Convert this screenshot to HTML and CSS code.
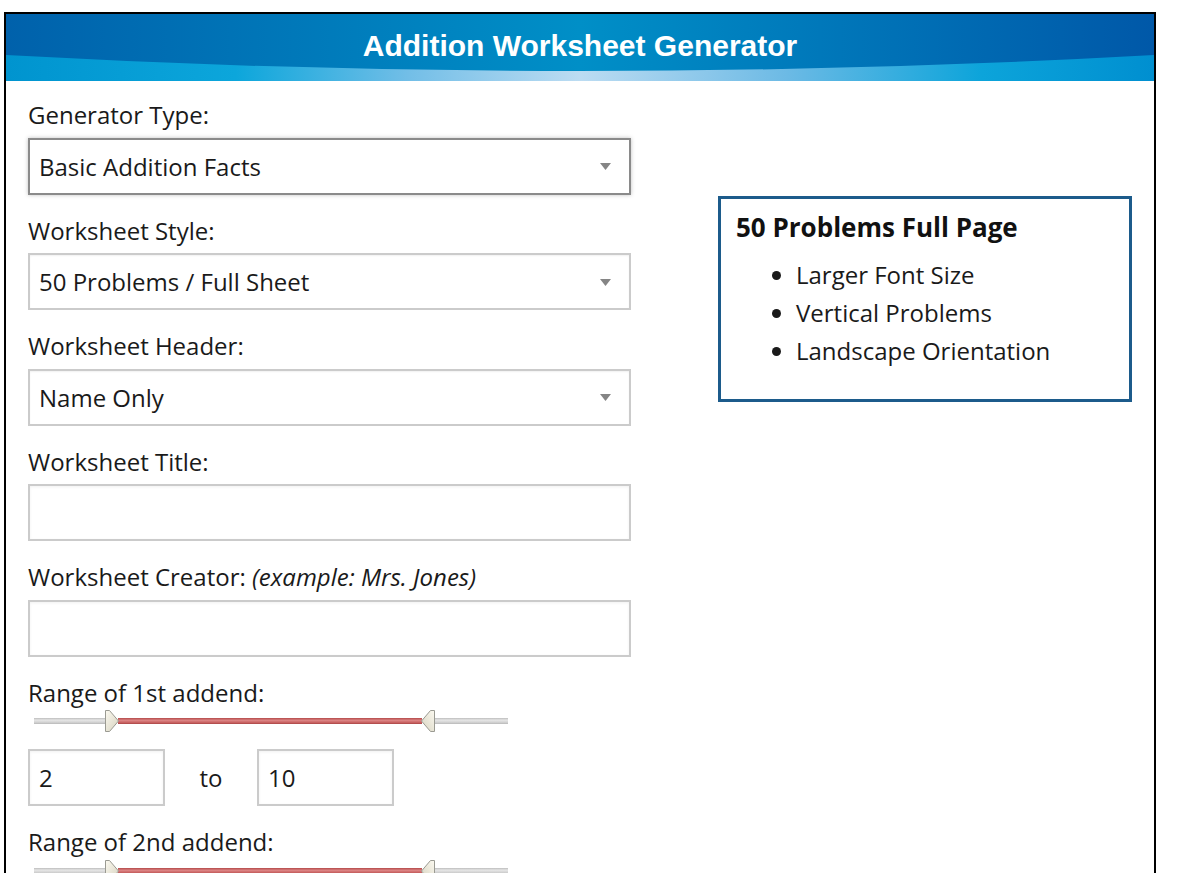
FILE: index.html
```html
<!DOCTYPE html>
<html lang="en">
<head>
<meta charset="utf-8">
<title>Addition Worksheet Generator</title>
<link rel="stylesheet" href="styles.css">
</head>
<body>
<div class="frame">
  <header class="banner">
    <svg class="banner-bg" viewBox="0 0 1148 67" preserveAspectRatio="none" aria-hidden="true">
      <defs>
        <linearGradient id="dark" x1="0" y1="0" x2="1" y2="0">
          <stop offset="0" stop-color="#0061ab"/>
          <stop offset="0.5" stop-color="#008fc7"/>
          <stop offset="1" stop-color="#0058a8"/>
        </linearGradient>
        <linearGradient id="light" x1="0" y1="0" x2="1" y2="0">
          <stop offset="0" stop-color="#0094cf"/>
          <stop offset="0.2" stop-color="#0ca6db"/>
          <stop offset="0.35" stop-color="#72bee7"/>
          <stop offset="0.5" stop-color="#bcdcf2"/>
          <stop offset="0.68" stop-color="#6cbae5"/>
          <stop offset="0.85" stop-color="#0ca4da"/>
          <stop offset="1" stop-color="#008fd0"/>
        </linearGradient>
      </defs>
      <rect x="0" y="0" width="1148" height="67" fill="url(#dark)"/>
      <path d="M0 41 Q574 73 1148 41 L1148 67 L0 67 Z" fill="url(#light)"/>
    </svg>
    <h1 class="banner-title">Addition Worksheet Generator</h1>
  </header>

  <main class="content">
    <section class="form-col">
      <div class="field">
        <label class="label">Generator Type:</label>
        <div class="select select-focus"><span>Basic Addition Facts</span><svg class="caret" viewBox="0 0 11 7"><path d="M0 0 H11 L5.5 7 Z"/></svg></div>
      </div>
      <div class="field">
        <label class="label">Worksheet Style:</label>
        <div class="select"><span>50 Problems / Full Sheet</span><svg class="caret" viewBox="0 0 11 7"><path d="M0 0 H11 L5.5 7 Z"/></svg></div>
      </div>
      <div class="field">
        <label class="label">Worksheet Header:</label>
        <div class="select"><span>Name Only</span><svg class="caret" viewBox="0 0 11 7"><path d="M0 0 H11 L5.5 7 Z"/></svg></div>
      </div>
      <div class="field">
        <label class="label">Worksheet Title:</label>
        <input class="text-input" type="text" value="">
      </div>
      <div class="field">
        <label class="label">Worksheet Creator: <em>(example: Mrs. Jones)</em></label>
        <input class="text-input" type="text" value="">
      </div>

      <div class="range-group">
        <label class="label">Range of 1st addend:</label>
        <div class="slider">
          <span class="track track-left"></span>
          <svg class="handle" viewBox="0 0 16 24"><defs><linearGradient id="hg1" x1="0" y1="0" x2="1" y2="1"><stop offset="0" stop-color="#fbf9f0"/><stop offset="1" stop-color="#d6d2bf"/></linearGradient></defs><path d="M1.5 1.5 H5.5 L14.5 12 L5.5 22.5 H1.5 Z" fill="url(#hg1)" stroke="#9a9a92" stroke-width="1" stroke-linejoin="round"/></svg>
          <span class="track track-range"></span>
          <svg class="handle" viewBox="0 0 16 24"><defs><linearGradient id="hg2" x1="1" y1="0" x2="0" y2="1"><stop offset="0" stop-color="#fbf9f0"/><stop offset="1" stop-color="#d6d2bf"/></linearGradient></defs><path d="M14.5 1.5 H10.5 L1.5 12 L10.5 22.5 H14.5 Z" fill="url(#hg2)" stroke="#9a9a92" stroke-width="1" stroke-linejoin="round"/></svg>
          <span class="track track-right"></span>
        </div>
        <div class="range-inputs">
          <input class="num-input" type="text" value="2">
          <span class="to">to</span>
          <input class="num-input" type="text" value="10">
        </div>
      </div>

      <div class="range-group">
        <label class="label">Range of 2nd addend:</label>
        <div class="slider">
          <span class="track track-left"></span>
          <svg class="handle" viewBox="0 0 16 24"><path d="M1.5 1.5 H5.5 L14.5 12 L5.5 22.5 H1.5 Z" fill="url(#hg1)" stroke="#9a9a92" stroke-width="1" stroke-linejoin="round"/></svg>
          <span class="track track-range"></span>
          <svg class="handle" viewBox="0 0 16 24"><path d="M14.5 1.5 H10.5 L1.5 12 L10.5 22.5 H14.5 Z" fill="url(#hg2)" stroke="#9a9a92" stroke-width="1" stroke-linejoin="round"/></svg>
          <span class="track track-right"></span>
        </div>
      </div>
    </section>

    <aside class="info-col">
      <div class="info-box">
        <h2 class="info-title">50 Problems Full Page</h2>
        <ul class="info-list">
          <li>Larger Font Size</li>
          <li>Vertical Problems</li>
          <li>Landscape Orientation</li>
        </ul>
      </div>
    </aside>
  </main>
</div>
</body>
</html>
```
FILE: styles.css
```css
html, body {
  margin: 0;
  padding: 0;
  background: #ffffff;
}

body {
  font-family: "Open Sans", "Liberation Sans", sans-serif;
  color: #1a1a1a;
  overflow: hidden;
  height: 873px;
}

.frame {
  margin: 12px 0 0 4px;
  width: 1148px;
  min-height: 900px;
  border: 2px solid #000;
  border-bottom: none;
  background: #fff;
}

.banner {
  display: grid;
  height: 67px;
}

.banner-bg,
.banner-title {
  grid-area: 1 / 1;
}

.banner-bg {
  width: 1148px;
  height: 67px;
  display: block;
}

.banner-title {
  margin: 0;
  align-self: start;
  justify-self: center;
  padding-top: 15px;
  font-family: "Liberation Sans", Arial, sans-serif;
  font-weight: bold;
  font-size: 30px;
  line-height: 34px;
  color: #fff;
}

.content {
  display: flex;
  padding: 20px 0 0 22px;
}

.form-col {
  width: 603px;
  flex: none;
}

.field {
  display: flex;
  flex-direction: column;
  margin-bottom: 22px;
}

.label {
  display: block;
  font-size: 24px;
  line-height: 27.5px;
  margin-bottom: 9px;
  color: #1a1a1a;
}

.label em {
  font-style: italic;
}

.select {
  box-sizing: border-box;
  height: 57px;
  border: 2px solid #cbcbcb;
  display: flex;
  align-items: center;
  justify-content: space-between;
  padding: 0 18px 0 9px;
  font-size: 24px;
  color: #1a1a1a;
  background: #fff;
  box-shadow: inset 0 1px 2px rgba(0, 0, 0, 0.06);
}

.select-focus {
  border-color: #8a8a8a;
  box-shadow: 0 0 4px rgba(0, 0, 0, 0.25);
}

.caret {
  width: 11px;
  height: 7px;
  fill: #858585;
  margin-top: 1px;
}

.text-input,
.num-input {
  box-sizing: border-box;
  height: 57px;
  border: 2px solid #cbcbcb;
  padding: 0 9px;
  font-family: "Open Sans", "Liberation Sans", sans-serif;
  font-size: 24px;
  color: #1a1a1a;
  background: #fff;
  box-shadow: inset 0 1px 3px rgba(0, 0, 0, 0.06);
  outline: none;
  margin: 0;
}

.text-input {
  width: 603px;
}

.range-group {
  display: flex;
  flex-direction: column;
}

.range-group .label {
  margin-bottom: 3px;
}

.slider {
  display: flex;
  align-items: center;
  height: 24px;
  padding-left: 6px;
  margin-bottom: 16px;
}

.track {
  display: block;
  height: 6px;
  box-sizing: border-box;
}

.track-left,
.track-right {
  background: linear-gradient(to bottom, #bdbdbd 0%, #e6e6e6 35%, #d4d4d4 70%, #b8b8b8 100%);
}

.track-left {
  width: 72px;
  margin-right: -2px;
}

.track-right {
  width: 74px;
  margin-left: -2px;
}

.track-range {
  width: 304px;
  margin: 0 -2px;
  background: linear-gradient(to bottom, #b44a4a 0%, #dc8484 40%, #c86262 75%, #a84444 100%);
}

.handle {
  width: 16px;
  height: 24px;
  flex: none;
  position: relative;
  z-index: 1;
}

.range-inputs {
  display: flex;
  align-items: center;
  margin-bottom: 22px;
}

.num-input {
  width: 137px;
}

.to {
  width: 92px;
  text-align: center;
  font-size: 24px;
  color: #1a1a1a;
}

.info-col {
  padding: 95px 0 0 87px;
}

.info-box {
  box-sizing: border-box;
  width: 414px;
  height: 206px;
  border: 3px solid #1c5b8b;
  padding: 13px 15px 0;
}

.info-title {
  margin: 0;
  font-size: 26px;
  line-height: 30px;
  font-weight: bold;
  color: #111;
}

.info-list {
  margin: 14px 0 0;
  padding-left: 60px;
  font-size: 24px;
  line-height: 38px;
  color: #1a1a1a;
}
```
